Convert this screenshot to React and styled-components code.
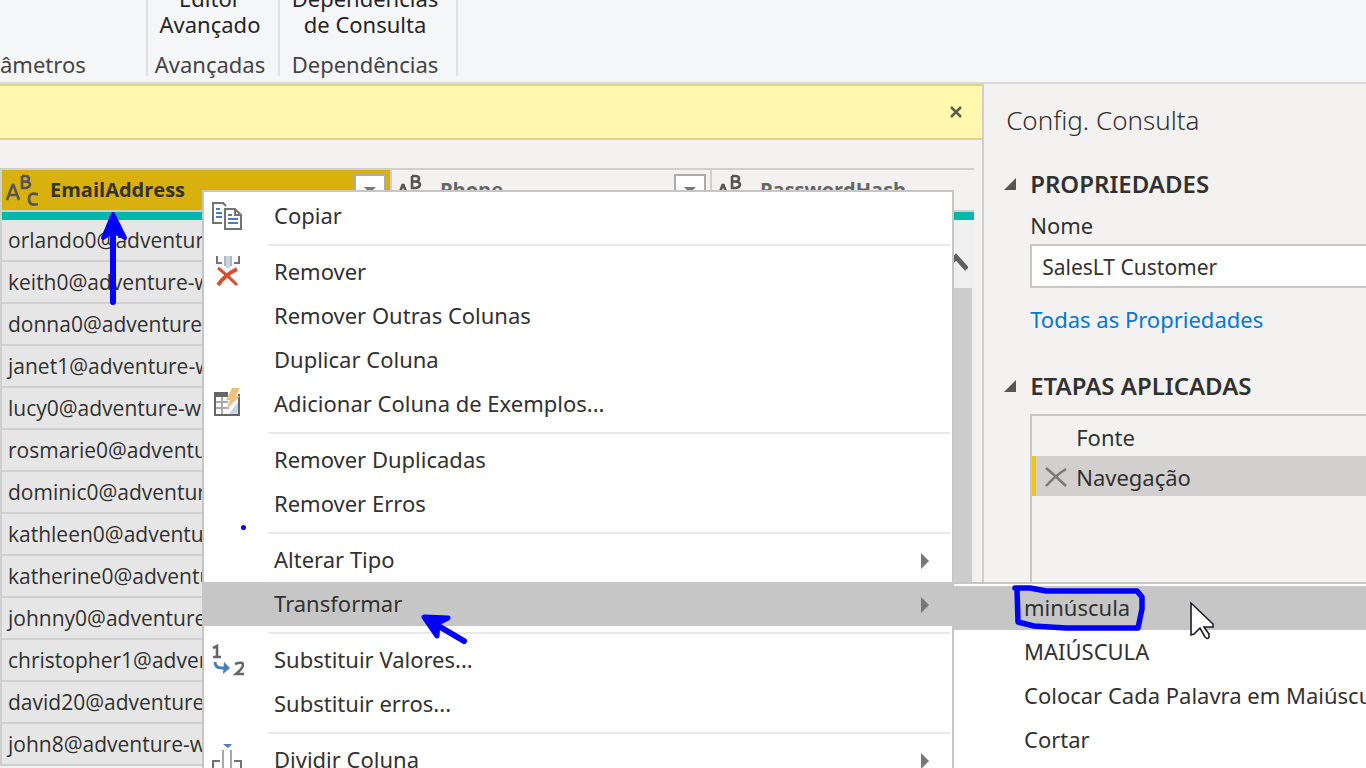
import React from "react";
import styled, { createGlobalStyle, css } from "styled-components";

const GlobalStyle = createGlobalStyle`
  *, *::before, *::after { box-sizing: border-box; }
  body {
    margin: 0;
    overflow: hidden;
    background: #f3f2f1;
    color: #323130;
    font-family: "Noto Sans", "Open Sans", sans-serif;
    font-size: 22px;
    line-height: 26px;
  }
  button, input {
    font: inherit;
    color: inherit;
  }
  button {
    border: 0;
    padding: 0;
    background: none;
    text-align: left;
    white-space: nowrap;
  }
`;

const Page = styled.div`
  position: relative;
  display: flex;
  flex-direction: column;
  height: 100vh;
  overflow: hidden;
`;

/* Ribbon */

const Ribbon = styled.header`
  display: flex;
  flex: none;
  height: 84px;
  padding-bottom: 6px;
  background: #f5f6f8;
  border-bottom: 2px solid #d9d9db;
`;

const RibbonGroup = styled.section`
  display: flex;
  flex-direction: column;
  justify-content: flex-end;
  gap: 15px;
  width: ${(p) => p.$width}px;
  padding-right: 6px;
  align-items: ${(p) => p.$align || "center"};
  border-right: 2px solid #e1e2e4;
  white-space: nowrap;
`;

const RibbonButton = styled.button`
  color: #252525;
  text-align: center;
`;

const GroupLabel = styled.span`
  color: #444;
  line-height: 24px;
`;

/* Main area */

const Body = styled.div`
  display: flex;
  flex: 1;
  min-height: 0;
`;

const Main = styled.main`
  display: flex;
  flex-direction: column;
  flex: 1;
  min-width: 0;
`;

const Notice = styled.div`
  display: flex;
  flex: none;
  align-items: center;
  justify-content: flex-end;
  height: 56px;
  padding-right: 19px;
  background: #fff8ad;
  border: solid #d9d689;
  border-width: 2px 0;
`;

const CloseButton = styled.button`
  display: flex;
  color: #605e4c;
`;

const GridArea = styled.div`
  position: relative;
  flex: 1;
  min-height: 0;
  margin: 28px 8px 0 0;
  overflow: hidden;
`;

const DataTable = styled.table`
  width: 100%;
  table-layout: fixed;
  border-collapse: separate;
  border-spacing: 0;
  border-left: 2px solid #cfcfcf;
  font-family: "Open Sans", "Noto Sans", sans-serif;
  font-size: 21px;
`;

const HeadCell = styled.th`
  width: ${(p) => (p.$width ? `${p.$width}px` : "auto")};
  height: 52px;
  padding: 0;
  font-size: 20px;
  font-weight: 700;
  vertical-align: top;
  color: ${(p) => (p.$selected ? "#333" : "#666")};
  border-top: 2px solid #cfcfcf;
  border-bottom: 8px solid #01b8aa;
`;

const HeadContent = styled.div`
  display: flex;
  align-items: center;
  height: 42px;
  padding: 0 4px;
  background: ${(p) => (p.$selected ? "#d9b10f" : "#f3f2f0")};
  border-bottom: 2px solid #cfcfcf;
  border-right: ${(p) => (p.$last ? 0 : 2)}px solid #cfcfcf;
`;

const HeadName = styled.span`
  flex: 1;
  padding-left: 12px;
  text-align: left;
`;

const FilterButton = styled.button`
  display: flex;
  align-items: center;
  justify-content: center;
  width: 32px;
  height: 32px;
  background: #fff;
  border: 2px solid #ababab;
`;

const Cell = styled.td`
  height: 42px;
  padding: 0 6px;
  overflow: hidden;
  white-space: nowrap;
  background: ${(p) => (p.$selected ? "#e6e6e6" : "#fff")};
  border-bottom: 2px solid #d0d0d0;
`;

const ScrollTrack = styled.div`
  position: absolute;
  top: 52px;
  right: 0;
  bottom: 0;
  width: 36px;
  padding-right: 2px;
  background: #f0f0f0;
`;

const ScrollUp = styled.button`
  display: flex;
  align-items: center;
  justify-content: center;
  width: 100%;
  height: 68px;
  padding-top: 18px;
`;

const ScrollThumb = styled.div`
  height: 100%;
  background: #cdcdcd;
`;

/* Query settings */

const Settings = styled.aside`
  display: flex;
  flex-direction: column;
  flex: none;
  width: 28.1vw;
  padding: 21px 0 0 20px;
  border-left: 2px solid #cfcfcf;
  overflow: hidden;
`;

const SettingsTitle = styled.h1`
  margin: 0 0 36px;
  padding-left: 2px;
  font-size: 26px;
  font-weight: 300;
  line-height: 30px;
`;

const Section = styled.section`
  display: flex;
  flex-direction: column;
  margin-bottom: 41px;
`;

const SectionTitle = styled.h2`
  display: flex;
  align-items: center;
  gap: 14px;
  margin: 0 0 15px;
  font-size: 24px;
  font-weight: 600;
  line-height: 26px;
`;

const Fields = styled.div`
  display: flex;
  flex-direction: column;
  padding-left: 26px;
`;

const NameInput = styled.input`
  width: 400px;
  height: 44px;
  margin: 6px 0 18px;
  padding: 2px 10px 0;
  background: #fff;
  border: 2px solid #c6c6c6;
  border-radius: 0;
  font-size: 21px;
`;

const PropertiesLink = styled.a`
  color: #0078d7;
  text-decoration: none;
`;

const Steps = styled.ol`
  width: 400px;
  height: 400px;
  margin: 0 0 0 26px;
  padding: 0;
  list-style: none;
  border: 2px solid #c6c6c6;
`;

const Step = styled.li`
  display: flex;
  align-items: center;
  height: 40px;
  padding-top: 1px;
  border-left: 4px solid transparent;
  ${(p) =>
    p.$selected &&
    css`
      background: #d2d0ce;
      border-left-color: #f2c811;
    `}
`;

const StepDelete = styled.button`
  display: flex;
  justify-content: center;
  width: 40px;
`;

/* Context menus */

const Menu = styled.div`
  position: absolute;
  width: 752px;
  padding: 2px 0;
  background: #fff;
  border: 2px solid #c6c6c6;
`;

const ContextMenu = styled(Menu)`
  top: 190px;
  left: 202px;
`;

const SubMenu = styled(Menu)`
  top: 582px;
  left: 952px;
  bottom: -40px;
`;

const MenuItem = styled.button`
  display: grid;
  grid-template-columns: 48px 1fr 32px;
  column-gap: 22px;
  align-items: center;
  width: 100%;
  height: 44px;
  background: ${(p) => (p.$active ? "#c6c6c6" : "transparent")};
`;

const MenuLabel = styled.span`
  padding-bottom: 2px;
`;

const IconSlot = styled.span`
  display: flex;
  justify-content: center;
`;

const Divider = styled.hr`
  height: 2px;
  margin: 6px 2px 4px 64px;
  background: #e8e8e8;
  border: 0;
`;

const InkLayer = styled.svg`
  position: absolute;
  inset: 0;
  width: 100%;
  height: 100%;
  pointer-events: none;
`;

/* Icons */

const TextTypeIcon = () => (
  <svg width="32" height="34" viewBox="0 0 32 34" aria-label="ABC" fill="none" stroke="#555" strokeWidth="2.600">
    <path d="M1 27L6.500 12h1L13 27M3 22h8" />
    <path d="M16 3v12h4q4-1 4-3.500t-4-3h-4M20 8.500q3-.500 3-3T19 3h-3" />
    <path d="M32 21.500q-9-3-9 4.500t9 5" />
  </svg>
);

const CaretIcon = () => (
  <svg width="12" height="6" viewBox="0 0 12 6">
    <path d="M0 0h12L6 6z" fill="#777" />
  </svg>
);

const CloseIcon = () => (
  <svg width="14" height="14" viewBox="0 0 14 14">
    <path d="M2 2l10 10M12 2L2 12" stroke="currentColor" strokeWidth="2.600" />
  </svg>
);

const ScrollUpIcon = () => (
  <svg width="26" height="20" viewBox="0 0 26 20">
    <path d="M2 17L14 4l11 12" fill="none" stroke="#606060" strokeWidth="5" />
  </svg>
);

const ExpandedIcon = () => (
  <svg width="12" height="12" viewBox="0 0 12 12">
    <path d="M0 12L12 0v12z" fill="#555" />
  </svg>
);

const DeleteIcon = () => (
  <svg width="22" height="20" viewBox="0 0 22 20" fill="none" stroke="#7b7a79">
    <path d="M1 1l7 6 13 12" strokeWidth="2.600" />
    <path d="M21 2Q10 9 1 19" strokeWidth="2.600" />
  </svg>
);

const SubmenuIcon = () => (
  <svg width="10" height="16" viewBox="0 0 10 16">
    <path d="M1 0l8 8-8 8z" fill="#777" />
  </svg>
);

const MenuIcon = ({ children }) => (
  <svg width="32" height="32" viewBox="0 0 32 32" fill="none" strokeWidth="2">
    {children}
  </svg>
);

const CopyIcon = () => (
  <MenuIcon>
    <path d="M10 23H1V3h10l3 3" stroke="#737373" />
    <path d="M13 9h10l6 6v14H13z" fill="#fff" stroke="#737373" />
    <path d="M23 9v6h6" stroke="#737373" />
    <path d="M4 9h4M4 13h6M4 17h6M16 15h4M16 19h10M16 23h10" stroke="#4a7ebb" />
  </MenuIcon>
);

const RemoveIcon = () => (
  <MenuIcon>
    <path d="M5 0v7h5M27 0v7h-5" stroke="#737373" />
    <path d="M14 0h4v12h-4z" fill="#c3d6e8" />
    <path d="M13 0v10M19 0v10" stroke="#b5b5b5" />
    <path d="M6 12q8 6 19 17" stroke="#d8502f" strokeWidth="3" />
    <path d="M25 13Q13 19 6 29" stroke="#d8502f" strokeWidth="4" />
  </MenuIcon>
);

const ExamplesIcon = () => (
  <MenuIcon>
    <path d="M2 4h14v5H2z" fill="#666" />
    <path d="M3 8v19h24V6" stroke="#666" />
    <path d="M10 9v17M4 14h12M4 20h13" stroke="#aaa" />
    <path d="M26 14v12h-9z" fill="#c3d6e8" />
    <path d="M20 0h8l-4 8h4L14 22l4-10h-4z" fill="#ecc27d" />
  </MenuIcon>
);

const ReplaceIcon = () => (
  <MenuIcon>
    <path d="M1 4l4-2v11M1 13h8" stroke="#666" strokeWidth="2.600" />
    <path d="M3 18q0 6 7 6h4" stroke="#4a7ebb" strokeWidth="3" />
    <path d="M12 18l6 6-7 6z" fill="#4a7ebb" />
    <path d="M23 20q8-3 8 1 0 3-7 9h8" stroke="#666" strokeWidth="2.600" />
  </MenuIcon>
);

const SplitIcon = () => (
  <MenuIcon>
    <path d="M11 0h9l-4 4z" fill="#4a7ebb" />
    <path d="M11 6v26M19 6v26" stroke="#aaa" />
    <path d="M1 32V17h7M29 32V17h-7" stroke="#737373" />
  </MenuIcon>
);

const users = [
  "orlando0", "keith0", "donna0", "janet1", "lucy0", "rosmarie0", "dominic0",
  "kathleen0", "katherine0", "johnny0", "christopher1", "david20", "john8",
];

const columns = [
  { name: "EmailAddress", width: 390, selected: true },
  { name: "Phone", width: 320 },
  { name: "PasswordHash", last: true },
];

const menuGroups = [
  [{ label: "Copiar", icon: <CopyIcon /> }],
  [
    { label: "Remover", icon: <RemoveIcon /> },
    { label: "Remover Outras Colunas" },
    { label: "Duplicar Coluna" },
    { label: "Adicionar Coluna de Exemplos...", icon: <ExamplesIcon /> },
  ],
  [{ label: "Remover Duplicadas" }, { label: "Remover Erros" }],
  [
    { label: "Alterar Tipo", submenu: true },
    { label: "Transformar", submenu: true, active: true },
  ],
  [
    { label: "Substituir Valores...", icon: <ReplaceIcon /> },
    { label: "Substituir erros..." },
  ],
  [{ label: "Dividir Coluna", icon: <SplitIcon />, submenu: true }],
];

const transforms = [
  { label: "minúscula", active: true },
  { label: "MAIÚSCULA" },
  { label: "Colocar Cada Palavra em Maiúscula" },
  { label: "Cortar" },
];

const Item = ({ label, icon, submenu, active }) => (
  <MenuItem role="menuitem" $active={active}>
    <IconSlot>{icon}</IconSlot>
    <MenuLabel>{label}</MenuLabel>
    <span>{submenu && <SubmenuIcon />}</span>
  </MenuItem>
);

export default function App() {
  return (
    <Page>
      <GlobalStyle />
      <Ribbon>
        <RibbonGroup $width={148} $align="flex-start">
          <GroupLabel>âmetros</GroupLabel>
        </RibbonGroup>
        <RibbonGroup $width={132}>
          <RibbonButton>Editor<br />Avançado</RibbonButton>
          <GroupLabel>Avançadas</GroupLabel>
        </RibbonGroup>
        <RibbonGroup $width={178}>
          <RibbonButton>Dependências<br />de Consulta</RibbonButton>
          <GroupLabel>Dependências</GroupLabel>
        </RibbonGroup>
      </Ribbon>

      <Body>
        <Main>
          <Notice>
            <CloseButton aria-label="Fechar"><CloseIcon /></CloseButton>
          </Notice>
          <GridArea>
            <DataTable>
              <thead>
                <tr>
                  {columns.map((c) => (
                    <HeadCell key={c.name} $width={c.width} $selected={c.selected}>
                      <HeadContent $selected={c.selected} $last={c.last}>
                        <TextTypeIcon />
                        <HeadName>{c.name}</HeadName>
                        {!c.last && <FilterButton aria-label="Filtrar"><CaretIcon /></FilterButton>}
                      </HeadContent>
                    </HeadCell>
                  ))}
                </tr>
              </thead>
              <tbody>
                {users.map((u) => (
                  <tr key={u}>
                    <Cell $selected>{u}@adventure-w</Cell>
                    <Cell />
                    <Cell />
                  </tr>
                ))}
              </tbody>
            </DataTable>
            <ScrollTrack>
              <ScrollUp aria-label="Rolar para cima"><ScrollUpIcon /></ScrollUp>
              <ScrollThumb />
            </ScrollTrack>
          </GridArea>
        </Main>

        <Settings>
          <SettingsTitle>Config. Consulta</SettingsTitle>
          <Section>
            <SectionTitle><ExpandedIcon />PROPRIEDADES</SectionTitle>
            <Fields>
              <label htmlFor="query-name">Nome</label>
              <NameInput id="query-name" defaultValue="SalesLT Customer" />
              <PropertiesLink href="#propriedades">Todas as Propriedades</PropertiesLink>
            </Fields>
          </Section>
          <Section>
            <SectionTitle><ExpandedIcon />ETAPAS APLICADAS</SectionTitle>
            <Steps>
              <Step><StepDelete aria-label="Excluir Fonte" />Fonte</Step>
              <Step $selected>
                <StepDelete aria-label="Excluir Navegação"><DeleteIcon /></StepDelete>
                Navegação
              </Step>
            </Steps>
          </Section>
        </Settings>
      </Body>

      <ContextMenu role="menu">
        {menuGroups.map((group, i) => (
          <React.Fragment key={group[0].label}>
            {i > 0 && <Divider />}
            {group.map((item) => <Item key={item.label} {...item} />)}
          </React.Fragment>
        ))}
      </ContextMenu>
      <SubMenu role="menu">
        {transforms.map((item) => <Item key={item.label} {...item} />)}
      </SubMenu>

      <InkLayer fill="none" stroke="#00f" strokeLinecap="round" strokeLinejoin="round">
        <path d="M113 302V218" strokeWidth="6" />
        <path d="M113 214l-10 24 10-7 12 7z" fill="#00f" strokeWidth="4" />
        <circle cx="243.500" cy="527.500" r="2.500" fill="#00f" stroke="none" />
        <path d="M464 641l-34-20" strokeWidth="6" />
        <path d="M424 617l24 1-10 5-1 13z" fill="#00f" strokeWidth="5" />
        <path d="M1015 588h15l16 3h91l5 6v12l-4 19h-72l-32-2-16-4-1-33" strokeWidth="5.500" />
        <path
          d="M1191 603v32l3-1 6-6 5 9q3 3 4 0v-3l-5-7h9v-3z"
          fill="#fff" stroke="#1d1a2b" strokeWidth="1.600" strokeLinejoin="miter"
        />
      </InkLayer>
    </Page>
  );
}
